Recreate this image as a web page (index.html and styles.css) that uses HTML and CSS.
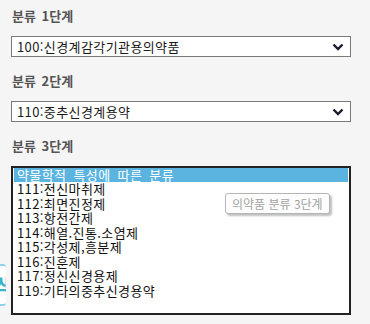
FILE: index.html
```html
<!DOCTYPE html>
<html lang="ko">
<head>
<meta charset="utf-8">
<link rel="stylesheet" href="styles.css">
</head>
<body>
<div class="side-btn"><span>색</span></div>
<div class="form">
  <div class="field">
    <div class="label">분류 1단계</div>
    <div class="select"><span>100:신경계감각기관용의약품</span>
      <svg class="chev" width="12" height="8" viewBox="0 0 12 8"><path d="M1.5 1.5 L6 6 L10.5 1.5" fill="none" stroke="#1b1b2e" stroke-width="2.4"/></svg>
    </div>
  </div>
  <div class="field">
    <div class="label">분류 2단계</div>
    <div class="select"><span>110:중추신경계용약</span>
      <svg class="chev" width="12" height="8" viewBox="0 0 12 8"><path d="M1.5 1.5 L6 6 L10.5 1.5" fill="none" stroke="#1b1b2e" stroke-width="2.4"/></svg>
    </div>
  </div>
  <div class="field">
    <div class="label">분류 3단계</div>
    <div class="listbox">
      <div class="opt sel">약물학적 특성에 따른 분류</div>
      <div class="opt">111:전신마취제</div>
      <div class="opt">112:최면진정제</div>
      <div class="opt">113:항전간제</div>
      <div class="opt">114:해열.진통.소염제</div>
      <div class="opt">115:각성제,흥분제</div>
      <div class="opt">116:진훈제</div>
      <div class="opt">117:정신신경용제</div>
      <div class="opt">119:기타의중추신경용약</div>
      <div class="tooltip">의약품 분류 3단계</div>
    </div>
  </div>
</div>
</body>
</html>
```
FILE: styles.css
```css
html, body {
  margin: 0;
  padding: 0;
  background: #f5f5f5;
}
body {
  width: 370px;
  height: 324px;
  overflow: hidden;
  position: relative;
  font-family: "Noto Sans CJK KR", "Noto Sans", sans-serif;
  color: #111;
}
.form {
  padding: 6px 19px 0 11px;
  display: flex;
  flex-direction: column;
}
.field {
  display: flex;
  flex-direction: column;
}
.label {
  font-size: 13px;
  font-weight: bold;
  color: #555;
  line-height: 20px;
  height: 20px;
  padding-left: 1px;
  margin-bottom: 10px;
  word-spacing: 2px;
}
.select {
  height: 19px;
  border: 1px solid #7a7a7a;
  background: #fff;
  display: flex;
  align-items: center;
  justify-content: space-between;
  padding: 0 6px 0 5px;
  font-size: 13px;
  line-height: 19px;
  margin-bottom: 14px;
  color: #1a1a1a;
}
.select span {
  letter-spacing: 0.4px;
}
.chev {
  display: block;
  margin-top: 1px;
}
.listbox {
  position: relative;
  border: 2px solid #222;
  background: #fff;
  box-sizing: border-box;
  height: 149px;
  padding: 0 1px;
}
.opt {
  font-size: 13px;
  line-height: 14.5px;
  height: 14.5px;
  padding-left: 3px;
  white-space: nowrap;
  letter-spacing: 0.4px;
  word-spacing: 3px;
}
.opt.sel {
  background: #5bb4e0;
  color: #fff;
  height: 14px;
  line-height: 14px;
}
.tooltip {
  position: absolute;
  left: 212px;
  top: 25px;
  padding: 0 6px;
  height: 19px;
  line-height: 19px;
  font-size: 12px;
  color: #a3a3a3;
  background: #fdfdfd;
  border: 1px solid #b5b5b5;
  border-radius: 3px;
  box-shadow: 2px 2px 2px rgba(0,0,0,0.25);
  white-space: nowrap;
  letter-spacing: 0;
  word-spacing: 0;
}
.side-btn {
  position: absolute;
  left: -30px;
  top: 264px;
  width: 34px;
  height: 38px;
  border: 2px solid #8fd3ea;
  border-right: none;
  border-radius: 3px;
  background: #fff;
  display: flex;
  align-items: center;
  justify-content: flex-end;
  font-size: 20px;
  font-weight: bold;
  color: #3ab3c8;
  overflow: hidden;
}
.side-btn span {
  margin-right: -8px;
}
```
